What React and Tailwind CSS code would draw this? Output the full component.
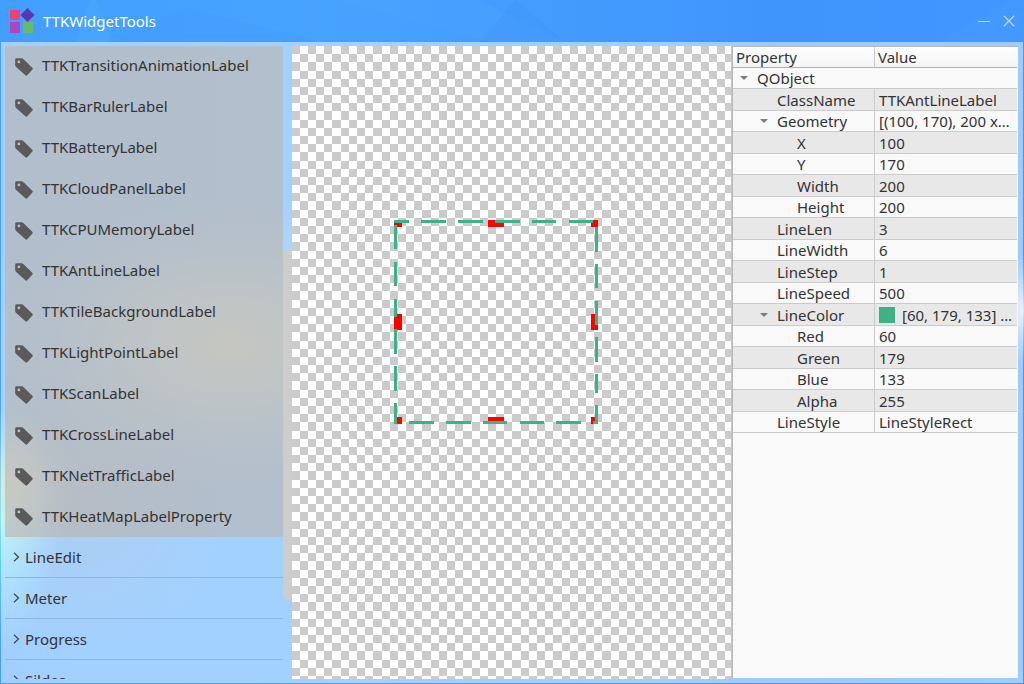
import React from "react";

const WIDGETS = [
  "TTKTransitionAnimationLabel", "TTKBarRulerLabel", "TTKBatteryLabel", "TTKCloudPanelLabel",
  "TTKCPUMemoryLabel", "TTKAntLineLabel", "TTKTileBackgroundLabel", "TTKLightPointLabel",
  "TTKScanLabel", "TTKCrossLineLabel", "TTKNetTrafficLabel", "TTKHeatMapLabelProperty",
];
const GROUPS = ["LineEdit", "Meter", "Progress", "Sildes"];

const PROPERTIES = [
  { name: "ClassName", value: "TTKAntLineLabel", level: 1 },
  { name: "Geometry", value: "[(100, 170), 200 x…", level: 1, open: true },
  { name: "X", value: "100", level: 2 },
  { name: "Y", value: "170", level: 2 },
  { name: "Width", value: "200", level: 2 },
  { name: "Height", value: "200", level: 2 },
  { name: "LineLen", value: "3", level: 1 },
  { name: "LineWidth", value: "6", level: 1 },
  { name: "LineStep", value: "1", level: 1 },
  { name: "LineSpeed", value: "500", level: 1 },
  { name: "LineColor", value: "[60, 179, 133] …", level: 1, open: true, swatch: true },
  { name: "Red", value: "60", level: 2 },
  { name: "Green", value: "179", level: 2 },
  { name: "Blue", value: "133", level: 2 },
  { name: "Alpha", value: "255", level: 2 },
  { name: "LineStyle", value: "LineStyleRect", level: 1 },
];

// One tile of the transparency checkerboard: 22 cells across 180 pixels.
const edgeX = (i) => Math.floor((i * 180) / 22);
const edgeY = (i) => Math.round((i * 180) / 22);
const CHECKER = (() => {
  let d = "";
  for (let r = 0; r < 22; r++) {
    for (let c = 0; c < 22; c++) {
      if ((r + c) % 2 === 0) {
        d += `M${edgeX(c)} ${edgeY(r)}H${edgeX(c + 1)}V${edgeY(r + 1)}H${edgeX(c)}Z`;
      }
    }
  }
  return d;
})();

function Logo() {
  return (
    <svg className="h-[26px] w-[27px] shrink-0" viewBox="0 0 27 26" aria-hidden="true">
      <rect x="2" y="2" width="10" height="10" fill="#ec407a" />
      <rect x="2" y="14" width="10" height="11" fill="#ab47bc" />
      <rect x="15" y="14" width="10" height="11" fill="#66bb6a" />
      <path d="M19.500 0 26.500 7 19.500 14 12.500 7Z" fill="#5e35b1" />
    </svg>
  );
}

function Tag() {
  return (
    <svg className="mt-[2px] h-[18px] w-[18px] shrink-0" viewBox="0 0 18 18" aria-hidden="true">
      <path
        fillRule="evenodd"
        fill="#5a5a5a"
        d="M1.500.3H6.800Q7.600.3 8.300 1L17.300 9.800Q18.200 10.700 17.400 11.500L12.200 17.200Q11.300 18.100 10.400 17.200L.9 8.700Q.2 8 .2 7.200V1.600Q.2.300 1.500.300ZM3.900 2.500A1.400 1.400 0 1 0 3.900 5.300 1.400 1.400 0 1 0 3.900 2.500Z"
      />
    </svg>
  );
}

function Arrow() {
  return (
    <svg className="h-[4px] w-[8px] shrink-0" viewBox="0 0 8 4" aria-hidden="true">
      <path d="M0 0H8L4 4Z" fill="#7c7c7c" />
    </svg>
  );
}

function Backdrop() {
  return (
    <svg className="absolute inset-0 h-full w-full" viewBox="0 0 1024 684" preserveAspectRatio="none" aria-hidden="true">
      <defs>
        <linearGradient id="sky" x1="0" y1="0" x2="1" y2="0">
          <stop offset="0" stopColor="#439fff" />
          <stop offset=".3" stopColor="#47a3ff" />
          <stop offset=".75" stopColor="#4095fd" />
          <stop offset="1" stopColor="#4197ff" />
        </linearGradient>
        <radialGradient id="cyan">
          <stop offset="0" stopColor="#72ecff" />
          <stop offset="1" stopColor="#62d4ff" stopOpacity="0" />
        </radialGradient>
        <radialGradient id="warm">
          <stop offset="0" stopColor="#d2dcb0" stopOpacity=".7" />
          <stop offset=".4" stopColor="#bcd6c4" stopOpacity=".45" />
          <stop offset="1" stopColor="#8dc0e0" stopOpacity="0" />
        </radialGradient>
        <radialGradient id="white">
          <stop offset="0" stopColor="#e8f0ff" stopOpacity=".9" />
          <stop offset="1" stopColor="#c0d8ff" stopOpacity="0" />
        </radialGradient>
        <radialGradient id="violet">
          <stop offset="0" stopColor="#7898b8" stopOpacity=".5" />
          <stop offset="1" stopColor="#6e9ed0" stopOpacity="0" />
        </radialGradient>
      </defs>
      <rect width="1024" height="684" fill="url(#sky)" />
      <path d="M90 0 76 42H112L96 0Z" fill="#67baff" opacity=".15" />
      <path d="M185 7 105 42H320Z" fill="#398ee8" opacity=".1" />
      <path d="M515 0 480 42H565Z" fill="#338aef" opacity=".16" />
      <path d="M340 0 490 42H565L480 0Z" fill="#62b4ff" opacity=".1" />
      <path d="M1010 0 940 42H1024V0Z" fill="#58a8ff" opacity=".14" />
      <ellipse cx="230" cy="345" rx="260" ry="150" fill="url(#warm)" />
      <ellipse cx="80" cy="500" rx="150" ry="160" fill="url(#violet)" />
      <ellipse cx="0" cy="520" rx="60" ry="130" fill="url(#cyan)" />
      <ellipse cx="15" cy="485" rx="60" ry="80" fill="url(#warm)" />
      <ellipse cx="1024" cy="310" rx="34" ry="55" fill="url(#white)" />
    </svg>
  );
}

function AntLine() {
  return (
    <svg className="h-[204px] w-[204px]" viewBox="0 0 204 204" shapeRendering="crispEdges" role="img" aria-label="Ant line preview">
      <path
        fill="#f00"
        d="M0 0H8V7H0ZM94 0H110V7H94ZM197 0H204V7H197ZM0 94H8V110H0ZM197 94H204V110H197ZM0 197H8V204H0ZM94 197H110V201H94ZM197 197H204V204H197Z"
      />
      <path
        fill="#3cb385"
        d="M0 0H15V3H0ZM27 0H52V3H27ZM64 0H89V3H64ZM101 0H126V3H101ZM138 0H162V3H138ZM175 0H199V3H175Z
           M0 5H3V29H0ZM0 42H3V66H0ZM0 79H3V97H0ZM0 109H3V134H0ZM0 146H3V171H0ZM0 183H3V204H0Z
           M201 7H204V32H201ZM201 44H204V68H201ZM201 81H204V105H201ZM201 117H204V142H201ZM201 154H204V173H201ZM201 185H204V204H201Z
           M15 201H40V204H15ZM52 201H77V204H52ZM89 201H113V204H89ZM126 201H150V204H126ZM162 201H187V204H162ZM199 201H204V204H199Z"
      />
    </svg>
  );
}

export default function App() {
  return (
    <div className="relative isolate flex h-screen flex-col overflow-hidden bg-[#439eff] font-['Noto_Sans','Open_Sans',sans-serif] text-[15px] text-[#333]">
      <Backdrop />
      <header className="relative flex h-[42px] shrink-0 items-center gap-2 pl-2 pr-[9px] text-white">
        <Logo />
        <h1 className="grow">TTKWidgetTools</h1>
        <button type="button" aria-label="Minimize" className="flex h-5 w-[13px] items-center">
          <svg className="h-[13px] w-[13px]" viewBox="0 0 13 13" aria-hidden="true"><path d="M0 6.500H12" stroke="#b4d8ff" /></svg>
        </button>
        <button type="button" aria-label="Close" className="ml-1 flex h-5 w-[12px] items-center">
          <svg className="h-[12px] w-[12px]" viewBox="0 0 12 12" aria-hidden="true"><path d="M.8.8 11.200 11.200M11.200.8.8 11.200" stroke="#b4d8ff" strokeWidth="1.300" /></svg>
        </button>
      </header>

      <main className="relative mx-px mb-px flex min-h-0 grow bg-white/50 pt-1 pr-[5px] pb-1 pl-1">
        <nav aria-label="Widgets" className="flex w-[287px] shrink-0 overflow-hidden">
          <div className="min-w-0 grow">
            <ul className="bg-[#bcb2aa]/60">
              {WIDGETS.map((name) => (
                <li key={name} className="h-[41px] last:h-10">
                  <button type="button" className="flex h-full w-full items-center gap-[9px] pb-[2px] pl-[10px] text-left">
                    <Tag />
                    <span>{name}</span>
                  </button>
                </li>
              ))}
            </ul>
            <ul>
              {GROUPS.map((name) => (
                <li key={name} className="border-b border-[#8bb6e0]">
                  <button type="button" className="flex h-10 w-full items-center gap-[5px] pl-2 text-left">
                    <svg className="h-[10px] w-[7px]" viewBox="0 0 7 10" aria-hidden="true">
                      <path d="M1 .7 5.500 5 1 9.300" fill="none" stroke="#444" strokeWidth="1.200" />
                    </svg>
                    <span>{name}</span>
                  </button>
                </li>
              ))}
            </ul>
          </div>
          <div className="w-[9px] shrink-0 pt-[204px]">
            <div className="h-[350px] rounded-full bg-[#cdcdcd]" />
          </div>
        </nav>

        <section aria-label="Preview" className="relative min-w-0 grow bg-white">
          <svg className="absolute inset-0 h-full w-full" shapeRendering="crispEdges" aria-hidden="true">
            <defs>
              <pattern id="checker" width="180" height="180" patternUnits="userSpaceOnUse">
                <path d={CHECKER} fill="#cbcbcb" />
              </pattern>
            </defs>
            <rect width="100%" height="100%" fill="url(#checker)" />
          </svg>
          <div className="absolute left-[102px] top-[174px]">
            <AntLine />
          </div>
        </section>

        <aside aria-label="Properties" className="mb-px ml-px w-[286px] shrink-0 border-t border-l border-[#b8b8b8] bg-[#f9f9f9] pr-px">
          <table className="w-full table-fixed border-separate border-spacing-0 text-left leading-5">
            <colgroup>
              <col className="w-[142px]" />
              <col />
            </colgroup>
            <thead>
              <tr className="h-[21px] bg-linear-to-b from-white to-[#f3f3f3]">
                <th scope="col" className="border-r border-b border-r-[#cbcbcb] border-b-[#b0b0b0] px-[3px] py-0 font-normal">Property</th>
                <th scope="col" className="border-b border-[#b0b0b0] px-[3px] py-0 font-normal">Value</th>
              </tr>
            </thead>
            <tbody>
              <tr className="h-[21px]">
                <td colSpan={2} className="border-b border-[#cbcbcb] p-0">
                  <div className="flex items-center gap-[9px] pl-[7px]"><Arrow />QObject</div>
                </td>
              </tr>
              {PROPERTIES.map((p, i) => (
                <tr key={p.name} className={i % 2 === 0 ? "h-[22px] bg-[#e8e8e8]" : "h-[21px]"}>
                  <th scope="row" className="border-r border-b border-[#cbcbcb] p-0 align-bottom font-normal">
                    <div className={p.level === 2 ? "flex items-center pl-16" : p.open ? "flex items-center gap-[9px] pl-[27px]" : "flex items-center pl-11"}>
                      {p.open && <Arrow />}
                      {p.name}
                    </div>
                  </th>
                  <td className="border-b border-[#cbcbcb] p-0 align-bottom">
                    <div className="flex items-center gap-[7px] pl-1 whitespace-nowrap">
                      {p.swatch && <span className="h-4 w-4 shrink-0 bg-[#3cb385]" />}
                      <span>{p.value}</span>
                    </div>
                  </td>
                </tr>
              ))}
            </tbody>
          </table>
        </aside>
      </main>
    </div>
  );
}
